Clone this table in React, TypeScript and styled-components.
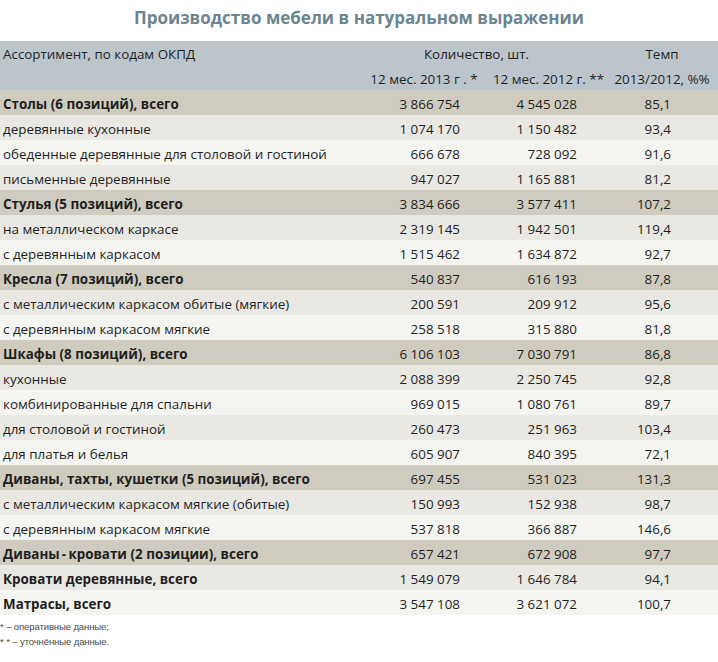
import React from "react";
import styled, { createGlobalStyle } from "styled-components";

const GlobalStyle = createGlobalStyle`
  html, body {
    margin: 0;
    padding: 0;
    background: #ffffff;
  }
  body {
    font-family: "Open Sans", "Noto Sans", sans-serif;
    color: #1f1f1f;
  }
`;

const Page = styled.div`
  width: 718px;
  display: flex;
  flex-direction: column;
`;

const Title = styled.h1`
  margin: 0;
  height: 41px;
  box-sizing: border-box;
  padding-top: 6px;
  text-align: center;
  font-family: "Open Sans", sans-serif;
  font-size: 17px;
  line-height: 24px;
  font-weight: 700;
  color: #6c8590;
`;

const Table = styled.table`
  width: 718px;
  border-collapse: collapse;
  border-spacing: 0;
  table-layout: fixed;
  font-size: 13.4px;
`;

const HeadRow = styled.tr<{ $h: number }>`
  background: #bcc5cc;
  height: ${(p) => p.$h}px;
`;

const HeadCell = styled.th<{ $align?: "left" | "center"; $pr?: number; $pt?: number }>`
  font-weight: 400;
  padding: ${(p) => p.$pt ?? 2}px ${(p) => p.$pr ?? 0}px 0 ${(p) => (p.$align === "left" ? 3 : 0)}px;
  text-align: ${(p) => p.$align ?? "center"};
  vertical-align: top;
  line-height: 22px;
  white-space: nowrap;
  color: #1f1f1f;
`;

type Variant = "group" | "odd" | "even";

const bg: Record<Variant, string> = {
  group: "#cfccbf",
  odd: "#e9e8e2",
  even: "#f4f5f1",
};

const Row = styled.tr<{ $variant: Variant }>`
  background: ${(p) => bg[p.$variant]};
  height: 25px;
`;

const Cell = styled.td<{ $num?: boolean; $pr?: number; $bold?: boolean }>`
  padding: 3px ${(p) => p.$pr ?? 0}px 0 ${(p) => (p.$num ? 0 : 3)}px;
  text-align: ${(p) => (p.$num ? "right" : "left")};
  font-weight: ${(p) => (p.$bold ? 700 : 400)};
  line-height: 22px;
  height: 25px;
  box-sizing: border-box;
  vertical-align: top;
  white-space: nowrap;
  overflow: hidden;
`;

const Notes = styled.div`
  display: flex;
  flex-direction: column;
  padding-top: 4px;
  font-family: "Liberation Sans", Arial, sans-serif;
  font-size: 9.5px;
  line-height: 15px;
  color: #4a4a4a;
  letter-spacing: -0.1px;
`;

type Item = { name: string; a: string; b: string; c: string; bold?: boolean; group?: boolean };

const data: Item[] = [
  { name: "Столы (6 позиций), всего", a: "3 866 754", b: "4 545 028", c: "85,1", bold: true, group: true },
  { name: "деревянные кухонные", a: "1 074 170", b: "1 150 482", c: "93,4" },
  { name: "обеденные деревянные для столовой и гостиной", a: "666 678", b: "728 092", c: "91,6" },
  { name: "письменные деревянные", a: "947 027", b: "1 165 881", c: "81,2" },
  { name: "Стулья (5 позиций), всего", a: "3 834 666", b: "3 577 411", c: "107,2", bold: true, group: true },
  { name: "на металлическом каркасе", a: "2 319 145", b: "1 942 501", c: "119,4" },
  { name: "с деревянным каркасом", a: "1 515 462", b: "1 634 872", c: "92,7" },
  { name: "Кресла (7 позиций), всего", a: "540 837", b: "616 193", c: "87,8", bold: true, group: true },
  { name: "с металлическим каркасом обитые (мягкие)", a: "200 591", b: "209 912", c: "95,6" },
  { name: "с деревянным каркасом мягкие", a: "258 518", b: "315 880", c: "81,8" },
  { name: "Шкафы (8 позиций), всего", a: "6 106 103", b: "7 030 791", c: "86,8", bold: true, group: true },
  { name: "кухонные", a: "2 088 399", b: "2 250 745", c: "92,8" },
  { name: "комбинированные для спальни", a: "969 015", b: "1 080 761", c: "89,7" },
  { name: "для столовой и гостиной", a: "260 473", b: "251 963", c: "103,4" },
  { name: "для платья и белья", a: "605 907", b: "840 395", c: "72,1" },
  { name: "Диваны, тахты, кушетки (5 позиций), всего", a: "697 455", b: "531 023", c: "131,3", bold: true, group: true },
  { name: "с металлическим каркасом мягкие (обитые)", a: "150 993", b: "152 938", c: "98,7" },
  { name: "с деревянным каркасом мягкие", a: "537 818", b: "366 887", c: "146,6" },
  { name: "Диваны\u2009-\u2009кровати (2 позиции), всего", a: "657 421", b: "672 908", c: "97,7", bold: true, group: true },
  { name: "Кровати деревянные, всего", a: "1 549 079", b: "1 646 784", c: "94,1", bold: true },
  { name: "Матрасы, всего", a: "3 547 108", b: "3 621 072", c: "100,7", bold: true },
];

function withVariants(items: Item[]): (Item & { variant: Variant })[] {
  let k = 0;
  return items.map((it) => {
    if (it.group) {
      k = 0;
      return { ...it, variant: "group" as Variant };
    }
    const v: Variant = k % 2 === 0 ? "odd" : "even";
    k += 1;
    return { ...it, variant: v };
  });
}

export default function App() {
  const rows = withVariants(data);
  return (
    <Page>
      <GlobalStyle />
      <Title>Производство мебели в натуральном выражении</Title>
      <Table>
        <colgroup>
          <col style={{ width: 357 }} />
          <col style={{ width: 134 }} />
          <col style={{ width: 115 }} />
          <col style={{ width: 112 }} />
        </colgroup>
        <thead>
          <HeadRow $h={24}>
            <HeadCell $align="left">Ассортимент, по кодам ОКПД</HeadCell>
            <HeadCell colSpan={2} $pr={10}>
              Количество, шт.
            </HeadCell>
            <HeadCell>Темп</HeadCell>
          </HeadRow>
          <HeadRow $h={25}>
            <HeadCell $align="left" $pt={3} />
            <HeadCell $pt={3}>12 мес. 2013 г . *</HeadCell>
            <HeadCell $pt={3}>12 мес. 2012 г. **</HeadCell>
            <HeadCell $pt={3}>2013/2012, %%</HeadCell>
          </HeadRow>
        </thead>
        <tbody>
          {rows.map((r) => (
            <Row key={r.name} $variant={r.variant}>
              <Cell $bold={r.bold}>{r.name}</Cell>
              <Cell $num $pr={31}>{r.a}</Cell>
              <Cell $num $pr={29}>{r.b}</Cell>
              <Cell $num $pr={47}>{r.c}</Cell>
            </Row>
          ))}
        </tbody>
      </Table>
      <Notes>
        <span>* – оперативные данные;</span>
        <span>* * – уточнённые данные.</span>
      </Notes>
    </Page>
  );
}
